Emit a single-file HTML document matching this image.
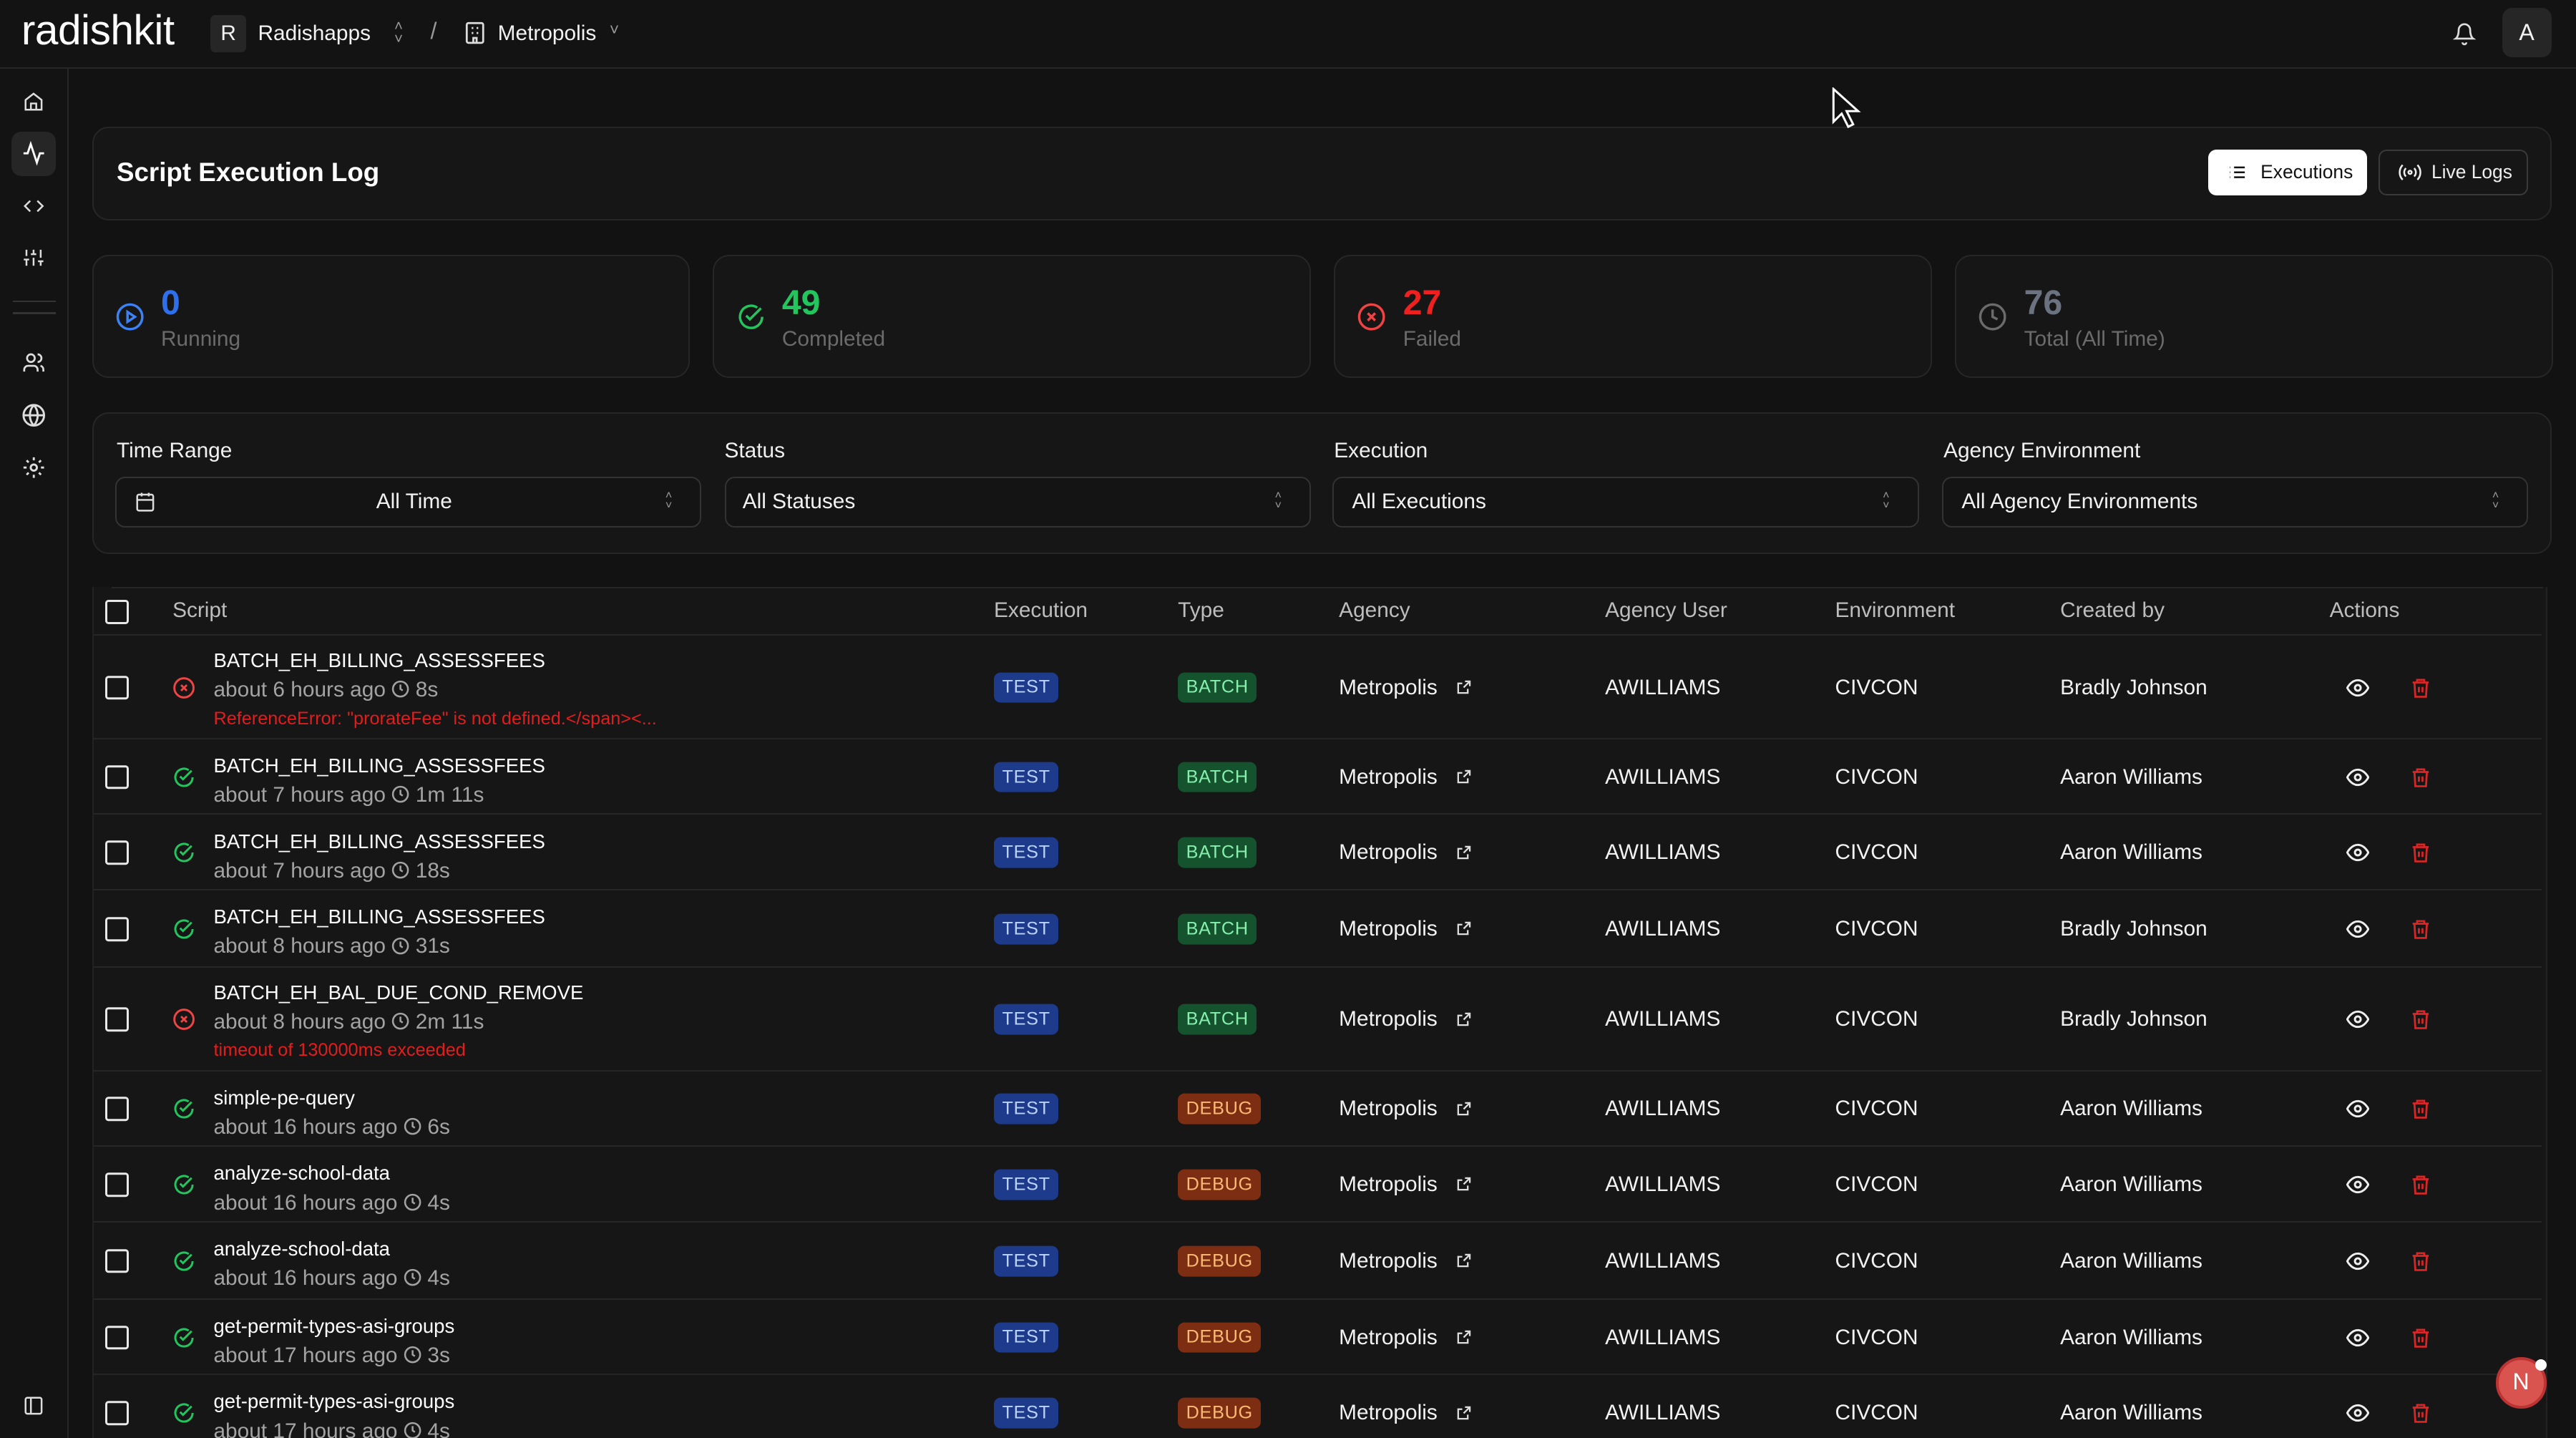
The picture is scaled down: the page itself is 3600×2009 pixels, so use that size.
<!DOCTYPE html>
<html><head><meta charset="utf-8"><style>
html,body{margin:0;padding:0;background:#121212;overflow:hidden}
#root{zoom:2.29592;width:1568px;height:875px;position:relative;font-family:"Liberation Sans",Arial,sans-serif;color:#f2f2f2;font-size:13px;background:#121212}
.a{position:absolute}
.card{position:absolute;background:#161616;border:1px solid #262626;border-radius:10px;box-sizing:border-box}
svg{display:block}
.cb{position:absolute;left:64px;width:12px;height:12px;border:1.5px solid #e8e8e8;border-radius:2px}
.row{position:absolute;left:57px;width:1490px;border-top:1px solid #262626}
.row .c{position:absolute;top:50%;transform:translateY(-50%);white-space:nowrap}
.badge{font-size:11px;padding:3px 5px;border-radius:4px;letter-spacing:.3px}
.test{background:#1e3a8a;color:#bcd2ff}
.batch{background:#14532d;color:#86efac}
.debug{background:#7c2d12;color:#fdba74}
.meta{color:#a3a3a3}
.sel{position:absolute;top:290px;height:31px;width:357px;border:1px solid #333;border-radius:6px;box-sizing:border-box;background:#141414}
.lbl{position:absolute;top:267px;font-size:13px;color:#f0f0f0}
</style></head><body><div id="root">

<!-- top bar -->
<div class="a" style="left:0;top:0;width:1568px;height:41px;border-bottom:1px solid #262626;background:#131313"></div>
<div class="a" style="left:13px;top:4px;font-size:25.5px;color:#fff;letter-spacing:-.2px">radishkit</div>
<div class="a" style="left:128px;top:9px;width:22px;height:23px;background:#262626;border-radius:3px;text-align:center;line-height:23px;font-size:13px">R</div>
<div class="a" style="left:157px;top:13px;font-size:13px">Radishapps</div>
<div class="a" style="left:240px;top:12px;color:#999;font-size:9px;line-height:8px">˄<br>˅</div>
<div class="a" style="left:262px;top:11px;color:#999;font-size:14px">/</div>
<svg class="a" style="left:283px;top:13px" width="12" height="14" viewBox="0 0 12 14" fill="none" stroke="#ddd" stroke-width="1.2"><rect x="1" y="1" width="10" height="12" rx="1"/><path d="M4 4h1M7 4h1M4 7h1M7 7h1M5 13v-3h2v3"/></svg>
<div class="a" style="left:303px;top:13px;font-size:13px">Metropolis</div>
<div class="a" style="left:371px;top:12px;color:#999;font-size:10px">˅</div>
<svg class="a" style="left:1493px;top:13px" width="14" height="15" viewBox="0 0 24 24" fill="none" stroke="#ddd" stroke-width="2"><path d="M6 8a6 6 0 0 1 12 0c0 7 3 9 3 9H3s3-2 3-9M10 21a2 2 0 0 0 4 0"/></svg>
<div class="a" style="left:1523px;top:5px;width:30px;height:30px;background:#262626;border-radius:6px;text-align:center;line-height:30px;font-size:14px">A</div>

<!-- sidebar -->
<div class="a" style="left:0;top:42px;width:41px;height:833px;border-right:1px solid #262626;background:#131313"></div>
<div class="a" style="left:7px;top:80px;width:27px;height:27px;background:#262626;border-radius:6px"></div>
<svg class="a" style="left:14px;top:55px" width="13" height="14" viewBox="0 0 24 24" fill="none" stroke="#ddd" stroke-width="2"><path d="M3 10l9-7 9 7v11H3zM9 21v-7h6v7"/></svg>
<svg class="a" style="left:13px;top:86px" width="15" height="15" viewBox="0 0 24 24" fill="none" stroke="#fff" stroke-width="2"><path d="M2 12h4l3-9 6 18 3-9h4"/></svg>
<svg class="a" style="left:13px;top:119px" width="15" height="13" viewBox="0 0 24 24" fill="none" stroke="#ddd" stroke-width="2"><path d="M8 6l-6 6 6 6M16 6l6 6-6 6"/></svg>
<svg class="a" style="left:14px;top:150px" width="13" height="14" viewBox="0 0 24 24" fill="none" stroke="#ddd" stroke-width="2"><path d="M4 21v-7M4 10V3M12 21v-9M12 8V3M20 21v-5M20 12V3M1 14h6M9 8h6M17 16h6"/></svg>
<div class="a" style="left:8px;top:183px;width:26px;height:1px;background:#333"></div>
<div class="a" style="left:8px;top:190px;width:26px;height:1px;background:#333"></div>
<svg class="a" style="left:13px;top:214px" width="15" height="14" viewBox="0 0 24 24" fill="none" stroke="#ddd" stroke-width="2"><circle cx="9" cy="7" r="4"/><path d="M2 21v-2a4 4 0 0 1 4-4h6a4 4 0 0 1 4 4v2M16 3a4 4 0 0 1 0 8M22 21v-2a4 4 0 0 0-3-4"/></svg>
<svg class="a" style="left:13px;top:245px" width="15" height="15" viewBox="0 0 24 24" fill="none" stroke="#ddd" stroke-width="2"><circle cx="12" cy="12" r="10"/><path d="M2 12h20M12 2a15 15 0 0 1 0 20M12 2a15 15 0 0 0 0 20"/></svg>
<svg class="a" style="left:13px;top:277px" width="15" height="15" viewBox="0 0 24 24" fill="none" stroke="#ddd" stroke-width="2"><circle cx="12" cy="12" r="3"/><path d="M12 2v3M12 19v3M2 12h3M19 12h3M5 5l2 2M17 17l2 2M5 19l2-2M17 7l2-2"/></svg>
<svg class="a" style="left:14px;top:849px" width="13" height="13" viewBox="0 0 24 24" fill="none" stroke="#ddd" stroke-width="2"><rect x="3" y="3" width="18" height="18" rx="2"/><path d="M9 3v18"/></svg>

<!-- title card -->
<div class="card" style="left:56px;top:77px;width:1497px;height:57px"></div>
<div class="a" style="left:71px;top:96px;font-size:16px;font-weight:bold;color:#fff">Script Execution Log</div>
<div class="a" style="left:1344px;top:91px;width:97px;height:28px;background:#fff;border-radius:5px"></div>
<svg class="a" style="left:1356px;top:99px" width="12" height="12" viewBox="0 0 24 24" fill="none" stroke="#111" stroke-width="2.2"><path d="M8 6h13M8 12h13M8 18h13M3 6h.5M3 12h.5M3 18h.5"/></svg>
<div class="a" style="left:1376px;top:98px;font-size:11.5px;color:#111">Executions</div>
<div class="a" style="left:1448px;top:91px;width:91px;height:28px;border:1px solid #3a3a3a;border-radius:5px;box-sizing:border-box"></div>
<svg class="a" style="left:1460px;top:99px" width="14" height="12" viewBox="0 0 28 24" fill="none" stroke="#eee" stroke-width="2.2"><circle cx="14" cy="12" r="2"/><path d="M9 7a7 7 0 0 0 0 10M19 7a7 7 0 0 1 0 10M5 3a13 13 0 0 0 0 18M23 3a13 13 0 0 1 0 18"/></svg>
<div class="a" style="left:1480px;top:98px;font-size:11.5px;color:#eee">Live Logs</div>

<!-- stat cards -->
<div class="card" style="left:56px;top:155px;width:364px;height:75px"></div>
<div class="card" style="left:434px;top:155px;width:364px;height:75px"></div>
<div class="card" style="left:812px;top:155px;width:364px;height:75px"></div>
<div class="card" style="left:1190px;top:155px;width:364px;height:75px"></div>
<svg class="a" style="left:70px;top:184px" width="18" height="18" viewBox="0 0 24 24" fill="none" stroke="#3b82f6" stroke-width="2"><circle cx="12" cy="12" r="10"/><path d="M10 8l6 4-6 4z"/></svg>
<div class="a" style="left:98px;top:172px;font-size:21px;font-weight:bold;color:#2f6fec">0</div>
<div class="a" style="left:98px;top:199px;font-size:13px;color:#6b6b6b">Running</div>
<svg class="a" style="left:448px;top:184px" width="18" height="18" viewBox="0 0 24 24" fill="none" stroke="#22c55e" stroke-width="2"><path d="M21 12a9 9 0 1 1-4-7.5"/><path d="M8 11l3 3 9-9"/></svg>
<div class="a" style="left:476px;top:172px;font-size:21px;font-weight:bold;color:#22c55e">49</div>
<div class="a" style="left:476px;top:199px;font-size:13px;color:#6b6b6b">Completed</div>
<svg class="a" style="left:826px;top:184px" width="18" height="18" viewBox="0 0 24 24" fill="none" stroke="#ef4444" stroke-width="2"><circle cx="12" cy="12" r="10"/><path d="M9 9l6 6M15 9l-6 6"/></svg>
<div class="a" style="left:854px;top:172px;font-size:21px;font-weight:bold;color:#ef2020">27</div>
<div class="a" style="left:854px;top:199px;font-size:13px;color:#6b6b6b">Failed</div>
<svg class="a" style="left:1204px;top:184px" width="18" height="18" viewBox="0 0 24 24" fill="none" stroke="#6b6b6b" stroke-width="2"><circle cx="12" cy="12" r="10"/><path d="M12 6v6l4 2"/></svg>
<div class="a" style="left:1232px;top:172px;font-size:21px;font-weight:bold;color:#6b7280">76</div>
<div class="a" style="left:1232px;top:199px;font-size:13px;color:#6b6b6b">Total (All Time)</div>

<!-- filters -->
<div class="card" style="left:56px;top:251px;width:1497px;height:86px"></div>
<div class="lbl" style="left:71px">Time Range</div>
<div class="lbl" style="left:441px">Status</div>
<div class="lbl" style="left:812px">Execution</div>
<div class="lbl" style="left:1183px">Agency Environment</div>
<div class="sel" style="left:70px"></div>
<div class="sel" style="left:441px"></div>
<div class="sel" style="left:811px"></div>
<div class="sel" style="left:1182px"></div>
<svg class="a" style="left:82px;top:299px" width="13" height="13" viewBox="0 0 24 24" fill="none" stroke="#ddd" stroke-width="2"><rect x="3" y="4" width="18" height="18" rx="2"/><path d="M3 10h18M8 2v4M16 2v4"/></svg>
<div class="a" style="left:229px;top:298px">All Time</div>
<div class="a" style="left:452px;top:298px">All Statuses</div>
<div class="a" style="left:823px;top:298px">All Executions</div>
<div class="a" style="left:1194px;top:298px">All Agency Environments</div>
<div class="a" style="left:405px;top:299px;color:#999;font-size:7px;line-height:6px">˄<br>˅</div>
<div class="a" style="left:776px;top:299px;color:#999;font-size:7px;line-height:6px">˄<br>˅</div>
<div class="a" style="left:1146px;top:299px;color:#999;font-size:7px;line-height:6px">˄<br>˅</div>
<div class="a" style="left:1517px;top:299px;color:#999;font-size:7px;line-height:6px">˄<br>˅</div>

<!-- table -->
<div class="a" style="left:56px;top:357px;width:1493px;height:520px;background:#161616;border-left:1px solid #222;border-right:1px solid #222"></div>
<div class="a" style="left:68px;top:357px;width:1480px;height:1px;background:#262626"></div>
<div class="cb" style="top:365px"></div>
<div class="a" style="top:364px;left:105px;color:#bdbdbd">Script</div>
<div class="a" style="top:364px;left:605px;color:#bdbdbd">Execution</div>
<div class="a" style="top:364px;left:717px;color:#bdbdbd">Type</div>
<div class="a" style="top:364px;left:815px;color:#bdbdbd">Agency</div>
<div class="a" style="top:364px;left:977px;color:#bdbdbd">Agency User</div>
<div class="a" style="top:364px;left:1117px;color:#bdbdbd">Environment</div>
<div class="a" style="top:364px;left:1254px;color:#bdbdbd">Created by</div>
<div class="a" style="top:364px;left:1418px;color:#bdbdbd">Actions</div>

<div id="rows"></div>

<!-- floating N -->
<div class="a" style="left:1519px;top:826px;width:31px;height:31px;border-radius:50%;background:#d9534f;border:2px solid #b33;box-sizing:border-box;text-align:center;line-height:27px;color:#fff;font-size:14px">N</div>
<div class="a" style="left:1543px;top:827px;width:7px;height:7px;border-radius:50%;background:#fff"></div>
<!-- cursor -->
<svg class="a" style="left:1115px;top:53px" width="18" height="26" viewBox="0 0 18 26"><path d="M1 1v20l5-5 4 8 3-1.5-4-8h7z" fill="#111" stroke="#fff" stroke-width="1.3"/></svg>
</div>
<script>
var R=[
[386,63,0,"BATCH_EH_BILLING_ASSESSFEES","about 6 hours ago","8s","batch","Bradly Johnson",'ReferenceError: "prorateFee" is not defined.&lt;/span&gt;&lt;...'],
[449,46,1,"BATCH_EH_BILLING_ASSESSFEES","about 7 hours ago","1m 11s","batch","Aaron Williams"],
[495,46,1,"BATCH_EH_BILLING_ASSESSFEES","about 7 hours ago","18s","batch","Aaron Williams"],
[541,47,1,"BATCH_EH_BILLING_ASSESSFEES","about 8 hours ago","31s","batch","Bradly Johnson"],
[588,63,0,"BATCH_EH_BAL_DUE_COND_REMOVE","about 8 hours ago","2m 11s","batch","Bradly Johnson","timeout of 130000ms exceeded"],
[651,46,1,"simple-pe-query","about 16 hours ago","6s","debug","Aaron Williams"],
[697,46,1,"analyze-school-data","about 16 hours ago","4s","debug","Aaron Williams"],
[743,47,1,"analyze-school-data","about 16 hours ago","4s","debug","Aaron Williams"],
[790,46,1,"get-permit-types-asi-groups","about 17 hours ago","3s","debug","Aaron Williams"],
[836,46,1,"get-permit-types-asi-groups","about 17 hours ago","4s","debug","Aaron Williams"]];
var ok='<svg width="14" height="14" viewBox="0 0 24 24" fill="none" stroke="#22c55e" stroke-width="2.2"><path d="M21 12a9 9 0 1 1-4-7.5"/><path d="M8 11l3 3 9-9"/></svg>';
var bad='<svg width="14" height="14" viewBox="0 0 24 24" fill="none" stroke="#ef4444" stroke-width="2.2"><circle cx="12" cy="12" r="10"/><path d="M9 9l6 6M15 9l-6 6"/></svg>';
var clk='<svg style="display:inline-block;vertical-align:-1px" width="11" height="11" viewBox="0 0 24 24" fill="none" stroke="#a3a3a3" stroke-width="2.4"><circle cx="12" cy="12" r="10"/><path d="M12 6v6l3 2"/></svg>';
var ext='<svg style="display:inline-block;vertical-align:-1px;margin-left:11px" width="10" height="10" viewBox="0 0 24 24" fill="none" stroke="#ddd" stroke-width="2.4"><path d="M14 3h7v7M21 3l-9 9M18 14v6H4V6h6"/></svg>';
var eye='<svg width="14" height="12" viewBox="0 0 24 20" fill="none" stroke="#eee" stroke-width="2.2"><path d="M1 10s4-8 11-8 11 8 11 8-4 8-11 8S1 10 1 10z"/><circle cx="12" cy="10" r="3"/></svg>';
var tr='<svg width="13" height="15" viewBox="0 0 24 24" fill="none" stroke="#dc2626" stroke-width="2.2"><path d="M3 6h18M8 6V3h8v3M5 6l1 16h12l1-16M10 11v6M14 11v6"/></svg>';
var h='';
R.forEach(function(r){
 var err=r[8];
 h+='<div class="row" style="top:'+r[0]+'px;height:'+r[1]+'px">';
 h+='<div class="cb" style="left:7px;top:50%;transform:translateY(-50%)"></div>';
 h+='<div class="c" style="left:48px">'+(r[2]?ok:bad)+'</div>';
 var ty=r[1]>50?6:7;
 h+='<div style="position:absolute;left:73px;top:'+ty+'px;white-space:nowrap;line-height:18px"><div style="color:#fff;font-size:12px">'+r[3]+'</div><div class="meta">'+r[4]+' '+clk+' '+r[5]+'</div>'+(err?'<div style="color:#e11d1d;font-size:11px;line-height:17px">'+err+'</div>':'')+'</div>';
 h+='<div class="c badge test" style="left:548px">TEST</div>';
 h+='<div class="c badge '+r[6]+'" style="left:660px">'+r[6].toUpperCase()+'</div>';
 h+='<div class="c" style="left:758px">Metropolis'+ext+'</div>';
 h+='<div class="c" style="left:920px">AWILLIAMS</div>';
 h+='<div class="c" style="left:1060px">CIVCON</div>';
 h+='<div class="c" style="left:1197px">'+r[7]+'</div>';
 h+='<div class="c" style="left:1371px">'+eye+'</div>';
 h+='<div class="c" style="left:1410px">'+tr+'</div>';
 h+='</div>';
});
document.getElementById('rows').innerHTML=h;
</script>
</body></html>
